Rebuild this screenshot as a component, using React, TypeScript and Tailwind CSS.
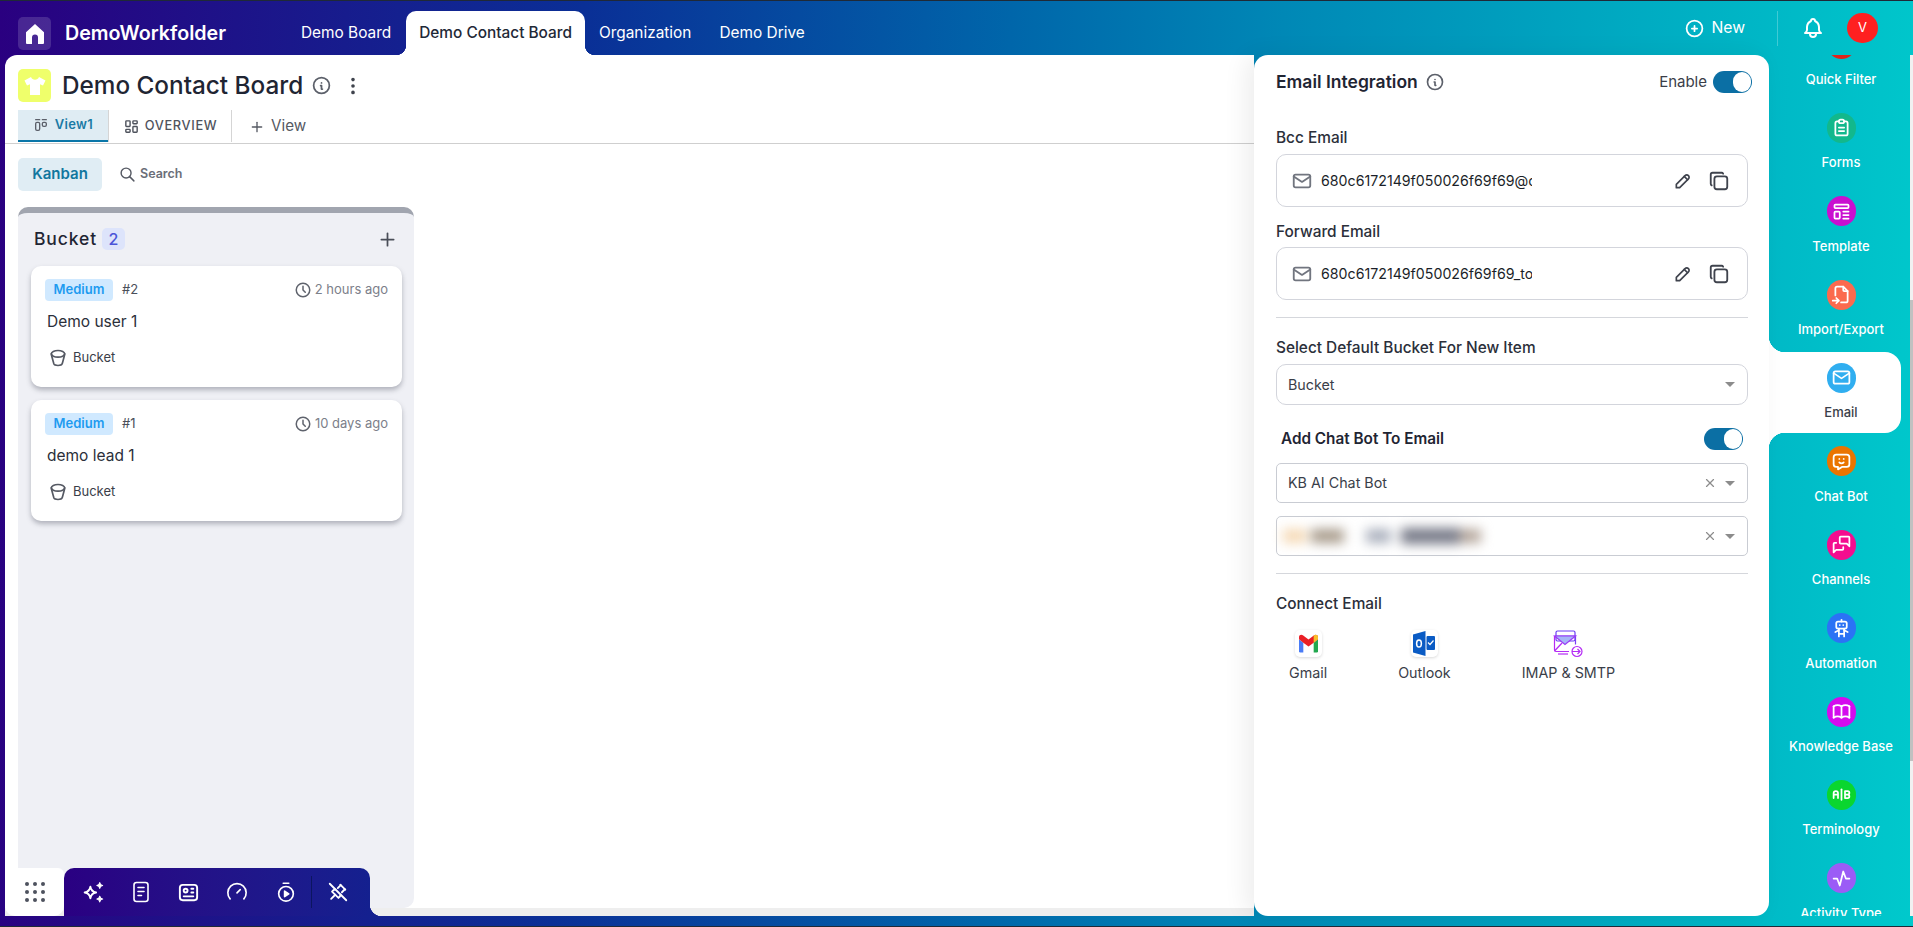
import { ReactNode } from "react"
import {
  TbActivity,
  TbAB,
  TbBell,
  TbBook,
  TbBucket,
  TbCirclePlus,
  TbClipboardText,
  TbClock,
  TbCopy,
  TbDotsVertical,
  TbFileImport,
  TbFilter,
  TbId,
  TbInfoCircle,
  TbLayoutDashboard,
  TbLayoutKanban,
  TbMail,
  TbMessageChatbot,
  TbMessages,
  TbPencil,
  TbPinnedOff,
  TbPlus,
  TbRobot,
  TbSearch,
  TbTemplate,
  TbX,
} from "react-icons/tb"

const HomeIcon = () => (
  <svg width="20" height="22" viewBox="0 0 20 22" fill="white">
    <path d="M10 1 1 9.2V20a1 1 0 0 0 1 1h5v-6.5a3 3 0 0 1 6 0V21h5a1 1 0 0 0 1-1V9.2z" />
  </svg>
)

const ShirtIcon = () => (
  <svg width="24" height="24" viewBox="0 0 24 24" fill="white">
    <path d="M8 3 1.5 6.5 4 11.5l3-1.2V21h10V10.3l3 1.2 2.5-5L16 3c-.7 1.8-2.2 2.8-4 2.8S8.700 4.800 8 3z" />
  </svg>
)

const SparkIcon = () => (
  <svg width="25" height="25" viewBox="0 0 24 24" fill="none" stroke="white" strokeWidth="1.800" strokeLinejoin="round">
    <path d="M9 6.500c.6 3.400 2.100 4.900 5.500 5.500-3.400.6-4.900 2.100-5.500 5.500-.6-3.400-2.100-4.900-5.500-5.500 3.400-.6 4.900-2.100 5.500-5.500z" />
    <path d="M18 2.500c.3 1.800 1 2.500 2.800 2.800-1.800.3-2.500 1-2.800 2.800-.3-1.800-1-2.500-2.800-2.800 1.800-.3 2.500-1 2.800-2.800z" fill="white" strokeWidth="1" />
    <path d="M18 15.500c.3 1.800 1 2.500 2.800 2.800-1.800.3-2.500 1-2.800 2.800-.3-1.800-1-2.500-2.800-2.800 1.800-.3 2.500-1 2.800-2.800z" fill="white" strokeWidth="1" />
  </svg>
)

const DocIcon = () => (
  <svg width="22" height="24" viewBox="0 0 22 24" fill="none" stroke="white" strokeWidth="1.600" strokeLinecap="round">
    <rect x="4" y="2.500" width="14" height="19" rx="2.500" />
    <path d="M8 7.500h6M8 11.500h6M8 15.500h3.500" />
  </svg>
)

const GaugeIcon = () => (
  <svg width="22" height="22" viewBox="0 0 24 24" fill="none" stroke="white" strokeWidth="1.800" strokeLinecap="round">
    <path d="M4.500 19.500a10 10 0 1 1 15 0" />
    <path d="m12 13 3.500-3.500" />
  </svg>
)

const TimerIcon = () => (
  <svg width="22" height="22" viewBox="0 0 24 24" fill="none" stroke="white" strokeWidth="1.800" strokeLinejoin="round">
    <circle cx="12" cy="14" r="8" />
    <path d="M9 2.500h6" strokeLinecap="round" />
    <path d="m10.500 11 4.500 3-4.500 3z" fill="white" />
  </svg>
)

const GmailIcon = () => (
  <svg width="21" height="19" viewBox="0 0 24 22">
    <path d="M1 6v14a1.500 1.500 0 0 0 1.500 1.500H6V10z" fill="#4a7cf6" />
    <path d="M23 6v14a1.500 1.500 0 0 1-1.500 1.500H18V10z" fill="#22a84f" />
    <path d="M1 3.500C1 1 3.800.2 5.500 1.500L12 6.500l6.500-5C20.200.2 23 1 23 3.500V6l-5 4-6 4.600L6 10 1 6z" fill="#ea2027" />
    <path d="M18 1.900 18.500 1.500C20.200.2 23 1 23 3.500V6l-5 4z" fill="#f7c02b" />
  </svg>
)

const OutlookIcon = () => (
  <svg width="22" height="25" viewBox="0 0 22 25">
    <path d="M0 3.500 12.500 0v25L0 21.500z" fill="#0a5bc4" />
    <rect x="13.500" y="5" width="8.500" height="14" rx="1" fill="#0a5bc4" />
    <ellipse cx="6" cy="12.500" rx="2.400" ry="3.500" fill="none" stroke="white" strokeWidth="1.500" />
    <path d="m15 11.500 2 2 3.500-4" fill="none" stroke="white" strokeWidth="1.200" />
  </svg>
)

const ImapIcon = () => (
  <svg width="30" height="28" viewBox="0 0 30 28" fill="none" stroke="#b52cf5" strokeWidth="1.200">
    <rect x="3" y="1" width="19" height="10" rx="1.500" stroke="#6a3cf5" />
    <path d="M1.500 6h21v8.500" stroke="#7c3cf5" />
    <path d="M1.500 6 12 14.500 22.500 6z" fill="#a6b5f7" stroke="#9a3cf5" />
    <path d="M1.500 6v14a1.500 1.500 0 0 0 1.500 1.500h13" />
    <path d="M1.500 21 9 13" />
    <path d="M5 24h10" />
    <circle cx="24" cy="21.500" r="5" />
    <path d="M19 21.500h8m-2.500-2.500 2.500 2.500-2.500 2.500" />
  </svg>
)

const Toggle = () => (
  <div className="flex h-[22px] w-[39px] items-center justify-end rounded-full bg-[#0b6fa4] pr-[1px]">
    <div className="h-[20px] w-[18px] rounded-full bg-white" />
  </div>
)

const Caret = () => (
  <div className="h-0 w-0 border-x-[5px] border-t-[5px] border-x-transparent border-t-[#8c8c8c]" />
)

const FieldBox = ({ text }: { text: string }) => (
  <div className="mt-[7px] flex h-[53px] w-[472px] items-center rounded-[10px] border border-[#d3d5dc] pl-[14px] pr-[17px]">
    <TbMail size={22} className="text-[#71757f]" />
    <span className="ml-[8px] w-[211px] overflow-hidden whitespace-nowrap text-[14.200px] text-[#1b1f29]">{text}</span>
    <TbPencil size={20} className="ml-auto text-[#3f434d]" />
    <TbCopy size={22} className="ml-[15px] text-[#3f434d]" />
  </div>
)

const sideItems: { label: string; color: string; icon: ReactNode; active?: boolean }[] = [
  { label: "Quick Filter", color: "bg-[#e0241b]", icon: <TbFilter size={18} /> },
  { label: "Forms", color: "bg-[#12b88c]", icon: <TbClipboardText size={21} /> },
  { label: "Template", color: "bg-[#c90fd0]", icon: <TbTemplate size={21} /> },
  { label: "Import/Export", color: "bg-[#fb6a4e]", icon: <TbFileImport size={21} /> },
  { label: "Email", color: "bg-[#30aef0]", icon: <TbMail size={21} />, active: true },
  { label: "Chat Bot", color: "bg-[#ea7500]", icon: <TbMessageChatbot size={21} /> },
  { label: "Channels", color: "bg-[#f40d8f]", icon: <TbMessages size={21} /> },
  { label: "Automation", color: "bg-[#2b73f5]", icon: <TbRobot size={21} /> },
  { label: "Knowledge Base", color: "bg-[#d40bee]", icon: <TbBook size={21} /> },
  { label: "Terminology", color: "bg-[#0ad62f]", icon: <TbAB size={21} /> },
  { label: "Activity Type", color: "bg-[#9b5cf6]", icon: <TbActivity size={21} /> },
]

const TaskCard = ({ id, title, time }: { id: string; title: string; time: string }) => (
  <div className="mb-[13px] h-[121px] w-[371px] rounded-[10px] bg-white px-[14px] pt-[13px] shadow-[0_3px_5px_rgba(60,64,80,0.35)]">
    <div className="flex h-[22px] items-center">
      <span className="flex h-[22px] w-[68px] items-center justify-center rounded-[4px] bg-[#d0e9ff] text-[13px] font-semibold text-[#1e9bf0]">
        Medium
      </span>
      <span className="ml-[9px] text-[13px] text-[#4a4f5a]">{id}</span>
      <TbClock size={18} className="ml-auto text-[#5f636d]" />
      <span className="ml-[3px] text-[13px] text-[#7c808a]">{time}</span>
    </div>
    <p className="ml-[2px] mt-[10px] text-[15.500px] leading-[22px] text-[#2b2f3a]">{title}</p>
    <div className="ml-[3px] mt-[15px] flex items-center">
      <TbBucket size={20} className="text-[#555963]" />
      <span className="ml-[5px] text-[13px] text-[#3a3e49]">Bucket</span>
    </div>
  </div>
)

export default function App() {
  return (
    <div className="relative flex h-[927px] w-[1913px] flex-col overflow-hidden border-y border-[#1f2937] bg-[linear-gradient(92deg,#2a0080_0%,#0a2f96_30%,#0066aa_52%,#0088b6_66%,#00c9cc_100%)] font-['Inter',sans-serif]">
      {/* top bar */}
      <header className="flex h-[54px] shrink-0 items-end pl-[18px]">
        <div className="mb-[5px] flex h-[33px] w-[33px] items-center justify-center rounded-[5px] bg-white/15">
          <HomeIcon />
        </div>
        <div className="mb-[5px] ml-[14px] flex h-[33px] w-[223px] items-center text-[19.700px] font-semibold text-white">DemoWorkfolder</div>
        <nav className="flex h-[44px] gap-[2px] text-[15.400px] text-white">
          <div className="flex items-center px-[13px]">Demo Board</div>
          <div className="relative flex items-center rounded-t-[10px] bg-white px-[13px] font-medium text-[#1f2937]">
            Demo Contact Board
            <span className="absolute bottom-0 left-[-10px] h-[10px] w-[10px] bg-[radial-gradient(circle_at_0_0,transparent_10px,white_10.500px)]" />
            <span className="absolute bottom-0 right-[-10px] h-[10px] w-[10px] bg-[radial-gradient(circle_at_100%_0,transparent_10px,white_10.500px)]" />
          </div>
          <div className="flex items-center px-[12px]">Organization</div>
          <div className="flex items-center px-[14px]">Demo Drive</div>
        </nav>
        <div className="ml-auto flex h-[54px] items-center text-white">
          <TbCirclePlus size={21} />
          <span className="ml-[6px] text-[15.700px]">New</span>
          <div className="ml-[32px] h-[35px] w-px bg-white/25" />
          <TbBell size={24} className="ml-[23px]" />
          <div className="ml-[22px] mr-[35px] flex h-[30px] w-[31px] items-center justify-center rounded-full bg-[#ff2020] text-[13px]">V</div>
        </div>
      </header>

      <div className="flex min-h-0 flex-1 pl-[5px]">
        {/* board */}
        <main className="relative flex min-w-0 flex-1 flex-col rounded-tl-[12px] border-b-[8px] border-[#eeeeee] bg-white">
          <div className="flex h-[47px] items-center pl-[13px] pt-[14px]">
            <div className="flex h-[33px] w-[33px] items-center justify-center rounded-[5px] bg-[#efff6b]">
              <ShirtIcon />
            </div>
            <h1 className="ml-[11px] text-[24.300px] font-medium leading-[33px] text-[#1f2533]">Demo Contact Board</h1>
            <TbInfoCircle size={21} className="ml-[8px] text-[#5c606a]" />
            <TbDotsVertical size={22} className="ml-[10px] text-[#3f434d]" />
          </div>

          <div className="ml-[13px] mt-[8px] flex h-[33px] items-stretch border-b border-transparent">
            <div className="flex w-[90px] items-center justify-center gap-[6px] border-b-2 border-[#0a76a8] bg-[#dfecf3] text-[13px] font-semibold tracking-wide text-[#1a7aa5]">
              <TbLayoutKanban size={16} className="text-[#5c606a]" />
              View1
            </div>
            <div className="flex w-[124px] items-center justify-center gap-[5px] border-x border-[#d5d5d5] text-[12.800px] font-medium tracking-wider text-[#4f535d]">
              <TbLayoutDashboard size={17} />
              OVERVIEW
            </div>
            <div className="ml-[17px] flex items-center gap-[6px] pt-[1px] text-[15.200px] text-[#555963]">
              <TbPlus size={16} />
              View
            </div>
          </div>
          <div className="h-px bg-[#cfcfcf]" />

          <div className="ml-[13px] mt-[14px] flex h-[33px] items-center">
            <div className="flex h-[33px] w-[84px] items-center justify-center rounded-[5px] bg-[#e0edf4] text-[15px] font-semibold text-[#12779f]">Kanban</div>
            <TbSearch size={17} className="ml-[17px] text-[#555963]" />
            <span className="ml-[4px] text-[12.500px] font-semibold text-[#6a6e78]">Search</span>
          </div>

          {/* column */}
          <section className="ml-[13px] mt-[16px] flex min-h-0 w-[396px] flex-1 flex-col rounded-[10px] border-t-[6px] border-[#a1a5af] bg-[#eff0f5] pl-[13px]">
            <div className="flex h-[53px] shrink-0 items-center pb-[1px] pl-[3px] pr-[16px]">
              <span className="text-[17.500px] font-medium tracking-wider text-[#1f2533]">Bucket</span>
              <span className="ml-[5px] flex h-[22px] w-[23px] items-center justify-center rounded-[5px] bg-[#dde4fb] text-[16px] font-medium text-[#4a55d8]">2</span>
              <TbPlus size={21} className="ml-auto text-[#4a4e58]" />
            </div>
            <TaskCard id="#2" title="Demo user 1" time="2 hours ago" />
            <TaskCard id="#1" title="demo lead 1" time="10 days ago" />
          </section>

          {/* dock */}
          <div className="absolute bottom-[-8px] left-0 flex h-[48px]">
            <div className="grid w-[59px] place-items-center rounded-b-[10px] rounded-tr-[6px] bg-white">
              <div className="grid grid-cols-3 gap-[4px]">
                {[...Array(9)].map((_, i) => (
                  <span key={i} className="h-[4px] w-[4px] rounded-full bg-[#4d525e]" />
                ))}
              </div>
            </div>
            <div className="relative flex w-[306px] items-center rounded-t-[10px] bg-gradient-to-r from-[#2a0082] to-[#14208f] pl-[17px] text-white">
              <SparkIcon />
              <div className="ml-[24px]">
                <DocIcon />
              </div>
              <TbId size={23} className="ml-[25px]" />
              <div className="ml-[26px]">
                <GaugeIcon />
              </div>
              <div className="ml-[27px]">
                <TimerIcon />
              </div>
              <div className="ml-[14px] h-[32px] w-px bg-[#0b1560]" />
              <TbPinnedOff size={22} className="ml-[15px]" />
              <span className="absolute bottom-0 right-[-12px] h-[12px] w-[12px] bg-[radial-gradient(circle_at_100%_0,transparent_12px,#14208f_12.500px)]" />
            </div>
          </div>
        </main>

        {/* email panel */}
        <aside className="relative z-10 flex w-[515px] shrink-0 flex-col rounded-[14px] bg-white pl-[22px] pr-[21px] pt-[15px] shadow-[-8px_0_24px_rgba(0,0,0,0.07)]">
          <div className="flex h-[24px] items-center">
            <span className="text-[17.500px] font-semibold text-[#1f2533]">Email Integration</span>
            <TbInfoCircle size={20} className="ml-[7px] text-[#5c606a]" />
            <span className="ml-auto text-[15px] text-[#3a3e49]">Enable</span>
            <div className="-mr-[4px] ml-[6px]">
              <Toggle />
            </div>
          </div>

          <label className="mt-[34px] text-[15.400px] font-medium leading-[20px] text-[#2b2f3a]">Bcc Email</label>
          <div className="-mt-[1px]">
            <FieldBox text="680c6172149f050026f69f69@c" />
          </div>
          <label className="mt-[15px] text-[15.400px] font-medium leading-[20px] text-[#2b2f3a]">Forward Email</label>
          <div className="-mt-[2px]">
            <FieldBox text="680c6172149f050026f69f69_to" />
          </div>

          <div className="mt-[17px] h-px w-[472px] bg-[#d5d7dc]" />

          <label className="mt-[20px] text-[15.400px] font-medium leading-[20px] text-[#2b2f3a]">Select Default Bucket For New Item</label>
          <div className="mt-[6px] flex h-[41px] w-[472px] items-center justify-between rounded-[10px] border border-[#d3d5dc] pl-[11px] pr-[12px] text-[14.300px] text-[#3a3e49]">
            Bucket
            <Caret />
          </div>

          <div className="mt-[23px] flex h-[22px] w-[467px] items-center justify-between pl-[5px]">
            <span className="text-[15.300px] font-semibold text-[#1f2533]">Add Chat Bot To Email</span>
            <Toggle />
          </div>

          <div className="mt-[13px] flex h-[40px] w-[472px] items-center rounded-[5px] border border-[#c9ccd3] pl-[11px] pr-[12px] text-[14.300px] text-[#3a3e49]">
            KB AI Chat Bot
            <TbX size={14} className="ml-auto text-[#8c8c8c]" />
            <div className="ml-[8px]">
              <Caret />
            </div>
          </div>

          <div className="mt-[13px] flex h-[40px] w-[472px] items-center rounded-[5px] border border-[#c9ccd3] pr-[12px]">
            {/* blurred account name */}
            <div className="ml-[6px] flex h-[16px] items-center blur-[6px]">
              <span className="h-[14px] w-[23px] bg-[#f5d9b5]" />
              <span className="ml-[5px] h-[14px] w-[33px] bg-[#a89b8b]" />
              <span className="ml-[22px] h-[14px] w-[25px] bg-[#aab0bd]" />
              <span className="ml-[10px] h-[16px] w-[59px] bg-[#777a88]" />
              <span className="h-[14px] w-[21px] bg-[#b5a79c]" />
            </div>
            <TbX size={14} className="ml-auto text-[#8c8c8c]" />
            <div className="ml-[8px]">
              <Caret />
            </div>
          </div>

          <div className="mt-[17px] h-px w-[472px] bg-[#d5d7dc]" />

          <label className="mt-[20px] text-[15.400px] font-medium leading-[20px] text-[#2b2f3a]">Connect Email</label>
          <div className="ml-[13px] mt-[16px] flex gap-[71px] text-[14.300px] text-[#3a3e49]">
            <div className="flex flex-col items-center">
              <div className="flex h-[27px] w-[27px] items-center justify-center rounded-[5px] bg-white shadow-[0_1px_3px_rgba(0,0,0,0.15)]">
                <GmailIcon />
              </div>
              <span className="mt-[5px]">Gmail</span>
            </div>
            <div className="flex flex-col items-center">
              <div className="flex h-[27px] w-[27px] items-center justify-center rounded-[5px] bg-white shadow-[0_1px_3px_rgba(0,0,0,0.15)]">
                <OutlookIcon />
              </div>
              <span className="mt-[5px]">Outlook</span>
            </div>
            <div className="flex flex-col items-center">
              <div className="flex h-[27px] items-center">
                <ImapIcon />
              </div>
              <span className="mt-[5px]">IMAP &amp; SMTP</span>
            </div>
          </div>
        </aside>

        {/* right rail */}
        <nav className="relative w-[144px] shrink-0 overflow-hidden">
          <div className="-mt-[36.600px]">
            {sideItems.map((item) => (
              <div
                key={item.label}
                className={
                  item.active
                    ? "relative mb-[2.400px] flex h-[81px] w-[132px] flex-col items-center rounded-r-[16px] bg-white pl-[12px] pt-[11px]"
                    : "flex h-[83.400px] flex-col items-center pt-[11px]"
                }
              >
                {item.active && (
                  <>
                    <span className="absolute left-0 top-[-16px] h-[16px] w-[16px] bg-[radial-gradient(circle_at_100%_0,transparent_16px,white_16.500px)]" />
                    <span className="absolute bottom-[-16px] left-0 h-[16px] w-[16px] bg-[radial-gradient(circle_at_100%_100%,transparent_16px,white_16.500px)]" />
                  </>
                )}
                <div className={`flex h-[30px] w-[29px] shrink-0 items-center justify-center rounded-full text-white ${item.color}`}>
                  {item.icon}
                </div>
                <span className={`mt-[11.500px] whitespace-nowrap text-[13px] font-medium leading-[16px] ${item.active ? "text-[#3a3e49]" : "text-white"}`}>
                  {item.label}
                </span>
              </div>
            ))}
          </div>
          {/* scrollbar */}
          <div className="absolute bottom-0 right-0 top-0 w-[3px] bg-[#f1f1f1]">
            <div className="mt-[245px] h-[461px] bg-[#c1c1c1]" />
          </div>
        </nav>
      </div>
      <div className="h-[10px] shrink-0" />
    </div>
  )
}
